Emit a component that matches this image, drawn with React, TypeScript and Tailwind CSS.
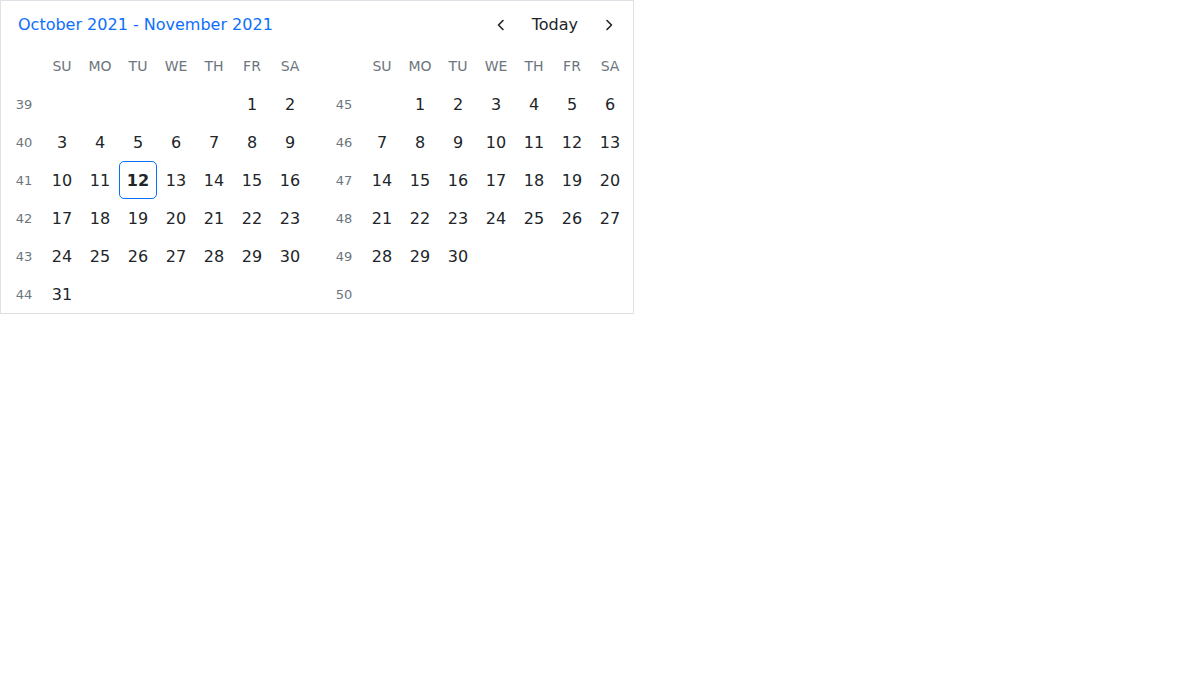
const weekDays = ["SU", "MO", "TU", "WE", "TH", "FR", "SA"];

type Month = { weeks: number[]; offset: number; days: number };

const months: Month[] = [
  { weeks: [39, 40, 41, 42, 43, 44], offset: 5, days: 31 },
  { weeks: [45, 46, 47, 48, 49, 50], offset: 1, days: 30 },
];

const Chevron = ({ dir }: { dir: "left" | "right" }) => (
  <svg width="16" height="16" viewBox="0 0 16 16" fill="none">
    <path
      d={dir === "left" ? "M10 3.5 L5.5 8 L10 12.5" : "M6 3.5 L10.5 8 L6 12.5"}
      stroke="#212529"
      strokeWidth="1.6"
      strokeLinecap="round"
      strokeLinejoin="round"
    />
  </svg>
);

const MonthGrid = ({ month, today }: { month: Month; today?: number }) => {
  const cells: (number | null)[] = [];
  for (let i = 0; i < month.offset; i++) cells.push(null);
  for (let d = 1; d <= month.days; d++) cells.push(d);
  while (cells.length < 42) cells.push(null);

  return (
    <div className="grid grid-cols-[38px_repeat(7,38px)] grid-rows-[repeat(7,38px)]">
      <div />
      {weekDays.map((w) => (
        <div
          key={w}
          className="flex items-center justify-center text-[14px] text-[#6c757d]"
        >
          {w}
        </div>
      ))}
      {month.weeks.map((wk, r) => (
        <>
          <div
            key={"w" + wk}
            className="flex items-center justify-center pt-[2px] text-[13px] text-[#6c757d]"
          >
            {wk}
          </div>
          {cells.slice(r * 7, r * 7 + 7).map((d, i) => (
            <div
              key={wk + "-" + i}
              className={
                d === today
                  ? "flex items-center justify-center rounded-[5px] border border-[#0d6efd] pt-[2px] font-bold text-[16px] text-[#212529]"
                  : "flex items-center justify-center pt-[2px] text-[16px] text-[#212529]"
              }
            >
              {d ?? ""}
            </div>
          ))}
        </>
      ))}
    </div>
  );
};

const App = () => {
  return (
    <div className="font-['DejaVu_Sans',sans-serif]">
      <div className="w-[634px] border border-[#dee2e6] bg-white">
        <div className="flex h-[46px] items-center justify-between pt-[2px] pl-[17px] pr-[8px]">
          <span className="text-[16px] text-[#0d6efd]">
            October 2021 - November 2021
          </span>
          <div className="flex items-center">
            <button className="flex h-8 w-8 items-center justify-center">
              <Chevron dir="left" />
            </button>
            <button className="px-[15px] text-[16px] text-[#212529]">Today</button>
            <button className="flex h-8 w-8 items-center justify-center">
              <Chevron dir="right" />
            </button>
          </div>
        </div>
        <div className="flex gap-4 px-1">
          <MonthGrid month={months[0]} today={12} />
          <MonthGrid month={months[1]} />
        </div>
      </div>
    </div>
  );
};

export default App;
